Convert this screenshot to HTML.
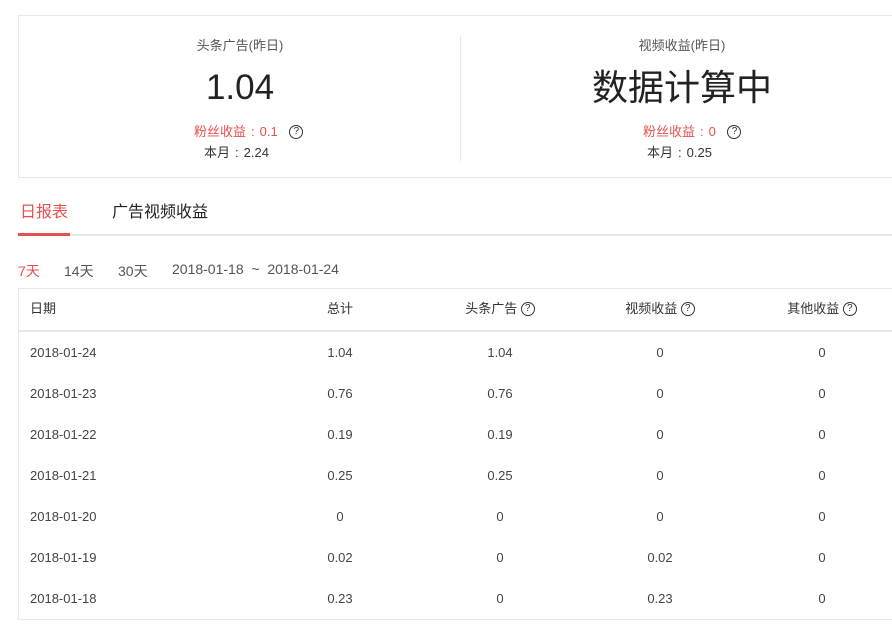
<!DOCTYPE html>
<html><head><meta charset="utf-8"><style>
*{margin:0;padding:0;box-sizing:border-box}
body{width:892px;height:632px;background:#fff;position:relative;overflow:hidden;font-family:"Liberation Sans","Noto Sans CJK SC",sans-serif;color:#333}
.a{position:absolute;white-space:nowrap}
.c{text-align:center}
.q{display:inline-block;width:14px;height:14px;border:1.2px solid #333;border-radius:50%;font-size:10px;line-height:12px;text-align:center;color:#333;vertical-align:middle;position:relative;top:-1px;font-style:normal}
.k{display:inline-block;margin:0 5px}
.row{position:absolute;left:18px;width:900px;height:41px;font-size:13px;color:#444;line-height:41px}
.row span{position:absolute;text-align:center;width:160px}
</style></head><body>
<div class="a" style="left:18px;top:15px;width:900px;height:163px;border:1px solid #e8e8e8"></div>
<div class="a" style="left:460px;top:36px;width:1px;height:125px;background:#e8e8e8"></div>

<div class="a c" style="left:140px;width:200px;top:35px;font-size:13px;color:#555">头条广告(昨日)</div>
<div class="a c" style="left:140px;width:200px;top:66px;font-size:35px;color:#222;line-height:44px">1.04</div>
<div class="a" style="left:194px;top:121px;font-size:13px;color:#e8504f">粉丝收益<span class="k">:</span>0.1 <span class="q" style="margin-left:8px">?</span></div>
<div class="a" style="left:204px;top:142px;font-size:13px;color:#333">本月<span class="k">:</span>2.24</div>

<div class="a c" style="left:582px;width:200px;top:35px;font-size:13px;color:#555">视频收益(昨日)</div>
<div class="a c" style="left:532px;width:300px;top:66px;font-size:36px;color:#222;line-height:44px">数据计算中</div>
<div class="a" style="left:643px;top:121px;font-size:13px;color:#e8504f">粉丝收益<span class="k">:</span>0 <span class="q" style="margin-left:8px">?</span></div>
<div class="a" style="left:647px;top:142px;font-size:13px;color:#333">本月<span class="k">:</span>0.25</div>

<div class="a" style="left:20px;top:198px;font-size:16px;color:#e8504f">日报表</div>
<div class="a" style="left:112px;top:198px;font-size:16px;color:#222">广告视频收益</div>
<div class="a" style="left:18px;top:234px;width:880px;height:2px;background:#e8e8e8"></div>
<div class="a" style="left:18px;top:233px;width:52px;height:3px;background:#e8504f"></div>

<div class="a" style="left:18px;top:261px;font-size:14px;color:#e8504f">7天</div>
<div class="a" style="left:64px;top:261px;font-size:14px;color:#555">14天</div>
<div class="a" style="left:118px;top:261px;font-size:14px;color:#555">30天</div>
<div class="a" style="left:172px;top:261px;font-size:14px;color:#555">2018-01-18 &nbsp;~ &nbsp;2018-01-24</div>

<div class="a" style="left:18px;top:288px;width:900px;height:332px;border:1px solid #e8e8e8"></div>
<div class="a" style="left:18px;top:330px;width:900px;height:2px;background:#e8e8e8"></div>
<div class="row" style="top:288px;color:#333">
<span style="left:12px;text-align:left">日期</span>
<span style="left:242px">总计</span>
<span style="left:402px">头条广告 <i class="q">?</i></span>
<span style="left:562px">视频收益 <i class="q">?</i></span>
<span style="left:724px">其他收益 <i class="q">?</i></span>
</div>
<div class="row" style="top:332px"><span style="left:12px;text-align:left">2018-01-24</span><span style="left:242px">1.04</span><span style="left:402px">1.04</span><span style="left:562px">0</span><span style="left:724px">0</span></div>
<div class="row" style="top:373px"><span style="left:12px;text-align:left">2018-01-23</span><span style="left:242px">0.76</span><span style="left:402px">0.76</span><span style="left:562px">0</span><span style="left:724px">0</span></div>
<div class="row" style="top:414px"><span style="left:12px;text-align:left">2018-01-22</span><span style="left:242px">0.19</span><span style="left:402px">0.19</span><span style="left:562px">0</span><span style="left:724px">0</span></div>
<div class="row" style="top:455px"><span style="left:12px;text-align:left">2018-01-21</span><span style="left:242px">0.25</span><span style="left:402px">0.25</span><span style="left:562px">0</span><span style="left:724px">0</span></div>
<div class="row" style="top:496px"><span style="left:12px;text-align:left">2018-01-20</span><span style="left:242px">0</span><span style="left:402px">0</span><span style="left:562px">0</span><span style="left:724px">0</span></div>
<div class="row" style="top:537px"><span style="left:12px;text-align:left">2018-01-19</span><span style="left:242px">0.02</span><span style="left:402px">0</span><span style="left:562px">0.02</span><span style="left:724px">0</span></div>
<div class="row" style="top:578px"><span style="left:12px;text-align:left">2018-01-18</span><span style="left:242px">0.23</span><span style="left:402px">0</span><span style="left:562px">0.23</span><span style="left:724px">0</span></div>
</body></html>
